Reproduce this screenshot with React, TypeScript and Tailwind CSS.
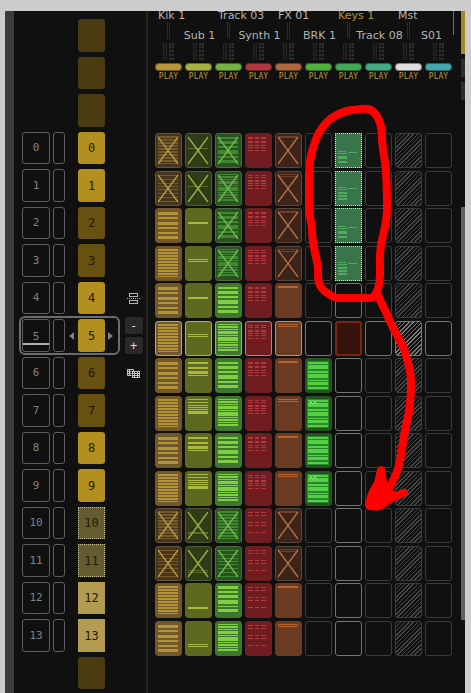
import { clsx } from 'clsx'

type Bar = [number, number]

type Tone = {
  fill: string
  muted: string
  bar: string
  mutedBar: string
  cross: string
}

const tracks = [
  { name: 'Kik 1', pill: 'bg-[#b8953c]' },
  { name: 'Sub 1', pill: 'bg-[#a5b43e]' },
  { name: 'Track 03', pill: 'bg-[#76b043]' },
  { name: 'Synth 1', pill: 'bg-[#b0393f]' },
  { name: 'FX 01', pill: 'bg-[#b0673c]' },
  { name: 'BRK 1', pill: 'bg-[#52ae3f]' },
  { name: 'Keys 1', pill: 'bg-[#43a957]', active: true },
  { name: 'Track 08', pill: 'bg-[#43aa86]' },
  { name: 'Mst', pill: 'bg-[#e0dde0]' },
  { name: 'S01', pill: 'bg-[#43a6b0]' },
]

const tones: Tone[] = [
  { fill: '#70582a', muted: '#46351a', bar: '#b2933a', mutedBar: '#74592a', cross: '#b39a48' },
  { fill: '#5d691f', muted: '#303b17', bar: '#a9b841', mutedBar: '#5d6b2a', cross: '#a0ae4a' },
  { fill: '#3f772c', muted: '#2a521f', bar: '#80d043', mutedBar: '#408734', cross: '#74b84c' },
  { fill: '#701c21', muted: '#701c21', bar: '#b5383f', mutedBar: '#b5383f', cross: '#b5383f' },
  { fill: '#6a3b20', muted: '#3c2418', bar: '#b5632f', mutedBar: '#70402a', cross: '#b57148' },
]

const thick: Bar[] = [[4, 3], [9, 2], [14, 3], [19, 2], [24, 2], [28, 3]]
const thin: Bar[] = [[3, 2], [6, 2], [9, 2], [12, 2], [15, 2], [18, 2], [21, 2], [24, 2], [27, 2], [30, 1]]
const ruled: Bar[] = [[4, 1], [8, 1], [12, 1], [15, 1], [18, 1], [22, 1], [26, 1], [30, 1]]
const green: Bar[] = [[4, 2], [8, 3], [13, 2], [17, 4], [23, 2], [27, 3]]
const greenThin: Bar[] = [[3, 1], [5, 2], [8, 1], [10, 3], [14, 1], [16, 4], [21, 1], [23, 2], [26, 1], [28, 2]]
const greenLate: Bar[] = [[3, 3], [8, 2], [12, 3], [17, 4], [23, 1], [26, 3]]
const subA: Bar[] = [[4, 2], [9, 2], [13, 3], [17, 1]]
const subB: Bar[] = [[3, 1], [6, 1], [9, 1], [11, 1], [13, 1], [15, 3]]
const notesA: Bar[] = [[4, 2], [8, 2], [12, 1], [14, 1], [17, 1]]
const notesB: Bar[] = [[4, 1], [6, 1], [9, 2], [12, 1], [14, 1], [17, 1]]
const notesC: Bar[] = [[4, 1], [7, 1], [14, 1], [17, 1], [24, 1]]
const fxA: Bar[] = [[3, 2]]
const fxB: Bar[] = [[3, 1], [5, 1]]
const brkBars: Bar[] = [[4, 2], [7, 4], [13, 2], [16, 4], [22, 1], [24, 3], [29, 2]]

// bars per row for the tracks that hold patterns, top to bottom
const bars: Bar[][][] = [
  [thin, ruled, thick, thin, thick, thin, thick, thin, thick, thin, thin, ruled, thin, thick],
  [[[15, 1]], [[15, 1]], [[14, 2]], [[13, 1], [15, 1]], [[14, 2]], [[13, 1], [15, 1]], subA, subB, subA, subB, [[24, 2]], [[24, 1], [26, 1]], [[24, 2]], [[23, 1], [25, 1]]],
  [green, greenThin, green, greenThin, green, greenThin, green, greenThin, green, greenThin, thin, ruled, greenLate, greenThin],
  [notesA, notesB, notesA, notesB, notesA, notesB, notesA, notesB, notesA, notesB, notesC, notesC, notesC, notesC],
  [fxA, fxB, fxA, fxB, fxA, fxB, fxA, fxB, fxA, fxB, fxA, fxB, fxA, fxB],
]

const crossed = [
  [0, 1, 10, 11],
  [0, 1, 10, 11],
  [0, 1, 2, 3, 10, 11],
  [],
  [0, 1, 2, 3, 10, 11],
]

const rows = Array.from({ length: 14 }, (_, i) => i)
const slots = Array.from({ length: 18 }, (_, i) => i - 3)
const currentRow = 5

function slotColor(n: number) {
  if (n < 0 || n > 13) return 'rounded-[3px] bg-[#4b3b13]'
  if (n === 10 || n === 11) return 'border border-dotted border-[#c9bf95] bg-[#655a30]'
  if (n >= 12) return 'bg-[#b39c52]'
  if ([2, 3, 6, 7].includes(n)) return 'rounded-[3px] bg-[#685010]'
  return 'rounded-[3px] bg-[#b38f20]'
}

function Pattern({ tone, list, isCrossed, split }: { tone: Tone; list: Bar[]; isCrossed: boolean; split: boolean }) {
  const color = isCrossed ? tone.mutedBar : tone.bar
  return (
    <svg viewBox="0 0 27 35" className="block size-full" aria-hidden="true">
      <rect width="27" height="35" rx="3" fill={isCrossed ? tone.muted : tone.fill} />
      {list.map(([y, h]) =>
        split ? (
          <g key={y} fill={color}>
            <rect x="3" y={y} width="5" height={h} />
            <rect x="10" y={y} width="4" height={h} />
            <rect x="16" y={y} width="5" height={h} />
          </g>
        ) : (
          <rect key={y} x="3" y={y} width="20" height={h} fill={color} />
        ),
      )}
      {isCrossed && (
        <>
          <path d="M3 4L23 31M23 4L3 31" stroke={tone.cross} strokeWidth="1.3" fill="none" />
          <rect x="0.5" y="0.5" width="26" height="34" rx="2.5" fill="none" stroke="#ffffff" strokeOpacity="0.16" />
        </>
      )}
    </svg>
  )
}

function BreakPattern({ wave }: { wave: boolean }) {
  return (
    <svg viewBox="0 0 27 35" className="block size-full" aria-hidden="true">
      <rect width="27" height="35" rx="3" fill="#24541e" />
      <rect x="2" y="3" width="22" height="29" fill="#2a862a" />
      {brkBars.map(([y, h]) => (
        <rect key={y} x="3" y={y} width="20" height={h} fill="#55d046" />
      ))}
      {wave && <path d="M4 8l2-2 2 2 2-2 2 2" fill="none" stroke="#8df07c" />}
    </svg>
  )
}

function SelectedPattern({ odd }: { odd: boolean }) {
  return (
    <svg viewBox="0 0 27 35" className="block size-full" aria-hidden="true">
      <rect width="27" height="35" fill="#39744a" />
      <g fill="#50ab61">
        <rect x="3" y={odd ? 16 : 18} width="8" height="1" />
        <rect x="13" y={odd ? 17 : 19} width="9" height="1" />
        <rect x="3" y={odd ? 18 : 20} width="9" height="1" />
        <rect x="3" y={odd ? 21 : 23} width="9" height={odd ? 2 : 3} />
        <rect x="3" y={odd ? 24 : 28} width="9" height="2" />
        {odd && <rect x="3" y="27" width="9" height="2" />}
      </g>
    </svg>
  )
}

function Cell({ row, col }: { row: number; col: number }) {
  const current = row === currentRow
  const label = `${tracks[col].name}, row ${row}`
  const base = 'h-[35px] w-[27px] shrink-0 overflow-hidden rounded-[3px]'

  if (col < 5) {
    return (
      <button aria-label={label} className={clsx(base, current && 'outline-1 -outline-offset-1 outline-white/45')}>
        <Pattern tone={tones[col]} list={bars[col][row]} isCrossed={crossed[col].includes(row)} split={col === 3} />
      </button>
    )
  }
  if (col === 5 && row >= 6 && row <= 9) {
    return (
      <button aria-label={label} className={base}>
        <BreakPattern wave={row % 2 === 1} />
      </button>
    )
  }
  if (col === 6 && row < 4) {
    return (
      <button aria-label={label} className="h-[35px] w-[27px] shrink-0 outline-1 -outline-offset-1 outline-[#d3e2d0] outline-dotted">
        <SelectedPattern odd={row % 2 === 1} />
      </button>
    )
  }
  if (col === 6 && current) {
    return <button aria-label={label} className={clsx(base, 'border-2 border-[#7c2412] bg-[#35120b]')} />
  }
  return (
    <button
      aria-label={label}
      className={clsx(
        base,
        'border',
        current || col === 6 ? 'border-[#747474]' : 'border-[#3b3b3b]',
        col === 8 && !current && 'bg-[repeating-linear-gradient(135deg,#484848_0px,#484848_1px,transparent_1px,transparent_3px)]',
        col === 8 && current && 'bg-[repeating-linear-gradient(135deg,#7c7c7c_0px,#7c7c7c_1px,transparent_1px,transparent_3px)]',
      )}
    />
  )
}

function SlotTool({ n }: { n: number }) {
  if (n === 4) {
    return (
      <button aria-label="Split sequence">
        <svg width="13" height="13" viewBox="0 0 13 13" fill="none" stroke="#b5b5b5" className="block">
          <rect x="2.5" y="1.5" width="8" height="3" />
          <rect x="2.5" y="8.5" width="8" height="3" />
          <path d="M0 6.5h13" strokeDasharray="1 1" />
        </svg>
      </button>
    )
  }
  if (n === 5) {
    const style = 'flex h-[17px] w-[18px] shrink-0 items-center justify-center rounded-[2px] bg-[#292929] text-[12px] leading-none text-[#dddddd]'
    return (
      <div className="flex flex-col gap-[3px]">
        <button className={style} aria-label="Remove">-</button>
        <button className={style} aria-label="Add">+</button>
      </div>
    )
  }
  if (n === 6) {
    return (
      <button aria-label="Clone pattern">
        <svg width="13" height="11" viewBox="0 0 13 11" fill="none" stroke="#c4c4c4" className="block">
          <path d="M4.5 7.5h-4v-6h6v2M0.5 3.5h4M0.5 5.5h4M2.5 1.5v6" />
          <rect x="5.5" y="3.5" width="7" height="6" fill="#101010" />
          <path d="M5.5 5.5h7M5.5 7.5h7M7.5 3.5v6M10.5 3.5v6" />
        </svg>
      </button>
    )
  }
  return null
}

function Slot({ n }: { n: number }) {
  const real = n >= 0 && n <= 13
  const current = n === currentRow
  return (
    <li className={clsx('flex items-center', n % 2 === 0 ? 'h-8' : 'h-[33px]')}>
      <div className={clsx('flex h-full w-[95px] shrink-0 items-center', current && 'rounded-[3px] outline-2 outline-offset-1 outline-[#6c6c6c]')}>
        <div className="flex h-full w-[43px] gap-[3px]">
          {real && (
            <>
              <button
                className={clsx(
                  'flex h-full w-7 flex-col items-center justify-center rounded-[3px] border border-[#5e5e5e] text-[11px] text-[#828282]',
                  current && 'pt-1',
                )}
              >
                <span className="leading-3">{n}</span>
                {current && <span className="h-0.5 w-full bg-[#b0b0b0]" />}
              </button>
              <button className="h-full w-3 rounded-[3px] border border-[#5e5e5e]" aria-label={`Section ${n}`} />
            </>
          )}
        </div>
        <div className="flex w-[13px] justify-center">
          {current && (
            <svg width="5" height="8" viewBox="0 0 5 8" fill="#7d7d7d"><path d="M5 0v8L0 4z" /></svg>
          )}
        </div>
        <button
          className={clsx('h-full w-[27px] text-[12px] text-[#241a08]', slotColor(n))}
          aria-label={real ? undefined : 'Adjacent sequence'}
        >
          {real ? n : ''}
        </button>
        {current && (
          <svg width="5" height="8" viewBox="0 0 5 8" fill="#7d7d7d" className="ml-[3px]"><path d="M0 0v8l5-4z" /></svg>
        )}
      </div>
      <div className="flex flex-1 justify-center pl-1">
        <SlotTool n={n} />
      </div>
    </li>
  )
}

function TrackHeader({ index }: { index: number }) {
  const track = tracks[index]
  const upper = index % 2 === 0
  return (
    <div className="flex w-[27px] shrink-0 flex-col items-center">
      <div className={clsx('flex h-[30px] w-full flex-col items-center gap-px', !upper && 'justify-end')}>
        <span
          className={clsx(
            'text-[11px] leading-[10px] whitespace-nowrap',
            track.active ? 'text-[#b8923c]' : 'text-[#b4b4b4]',
            upper && 'ml-[3px] self-start',
            !upper && index !== 9 && 'ml-0.5',
            index === 9 && 'mr-[10px] self-end',
          )}
        >
          {track.name}
        </span>
        {upper && <span className="h-[17px] w-[3px] border-x border-[#2b2b2b]" />}
      </div>
      <div className="mt-0.5 flex h-[17px] gap-0.5">
        <span className="w-1 border-x border-dotted border-[#303030] bg-[#181818]" />
        <span className="w-[5px] border-x-2 border-dotted border-[#303030] bg-[#181818]" />
      </div>
      <span className={clsx('mt-[3px] h-2 w-[27px] rounded-[4px] border border-black/40', track.pill)} />
      <button className="mt-0.5 font-['DejaVu_Sans_Mono'] text-[8px] leading-2 text-[#b49b45]">PLAY</button>
    </div>
  )
}

// freehand marker drawn over the matrix
function Marker() {
  return (
    <svg className="pointer-events-none absolute -top-[11px] left-0 h-[693px] w-[317px]" viewBox="148 0 317 693" aria-hidden="true">
      <path
        d="M368 109C362 108 357 110 351 110C341 112 334 115 327 122C321 128 316 137 313 148C310 156 309 165 309 182V208C309 217 312 222 312 230C312 242 315 252 317 262C319 268 317 276 319 283C321 290 330 296 337 298H370C376 297 379 291 380 275C380 260 379 251 382 240C385 228 387 220 387 210C387 198 387 188 386 175C386 160 381 146 382 133C381 123 377 111 368 109Z"
        fill="none"
        stroke="#ff0000"
        strokeWidth="8"
        strokeLinejoin="round"
      />
      <path
        d="M377 292C380 302 385 309 389 319C393 330 400 339 404 349C407 359 411 369 411 382C411 400 410 410 407 421C404 434 402 448 400 461C398 471 393 482 387 491"
        fill="none"
        stroke="#ff0000"
        strokeWidth="8"
      />
      <path
        d="M377 470C377 465 384 465 385 469L387 482L395 492L403 489C408 488 410 493 406 496C398 499 390 503 384 508C378 512 373 510 368 510C365 508 364 505 366 500C367 494 370 488 374 482Z"
        fill="#ff0000"
      />
    </svg>
  )
}

export default function App() {
  return (
    <main className="flex min-h-screen flex-col bg-[#cdcdcd] pt-[11px] pr-1.5 pl-[5px] font-['DejaVu_Sans',sans-serif]">
      <div className="flex flex-1 bg-[#101010]">
        <div className="w-[9px] shrink-0 bg-[#3c3c3c]" />

        {/* Sequence list */}
        <ol className="flex w-[132px] shrink-0 flex-col gap-[5px] pt-2 pl-2 font-['DejaVu_Sans_Mono',monospace]">
          {slots.map((n) => (
            <Slot key={n} n={n} />
          ))}
        </ol>
        <div className="w-0.5 shrink-0 bg-[#242424]" />

        {/* Pattern matrix */}
        <section className="relative flex-1 pl-[7px]">
          <header className="flex h-[122px] gap-[3px]">
            {tracks.map((track, i) => (
              <TrackHeader key={track.name} index={i} />
            ))}
            <span className="-ml-0.5 h-6 w-px bg-[#8a6c22]" />
          </header>
          {rows.map((row) => (
            <div key={row} className={clsx('flex gap-[3px]', row % 2 === 0 ? 'h-[38px]' : 'h-[37px]')}>
              {tracks.map((track, col) => (
                <Cell key={track.name} row={row} col={col} />
              ))}
            </div>
          ))}
          <Marker />
        </section>

        {/* Scroll gutter */}
        <div className="flex w-1 shrink-0 flex-col gap-[5px]">
          <span className="h-[43px] bg-[#a88525]" />
          <span className="h-[18px] bg-[#2d2d30]" />
          <span className="h-[18px] bg-[#2d2d30]" />
          <span className="mt-[102px] h-[413px] bg-[#626262]" />
        </div>
      </div>
    </main>
  )
}
